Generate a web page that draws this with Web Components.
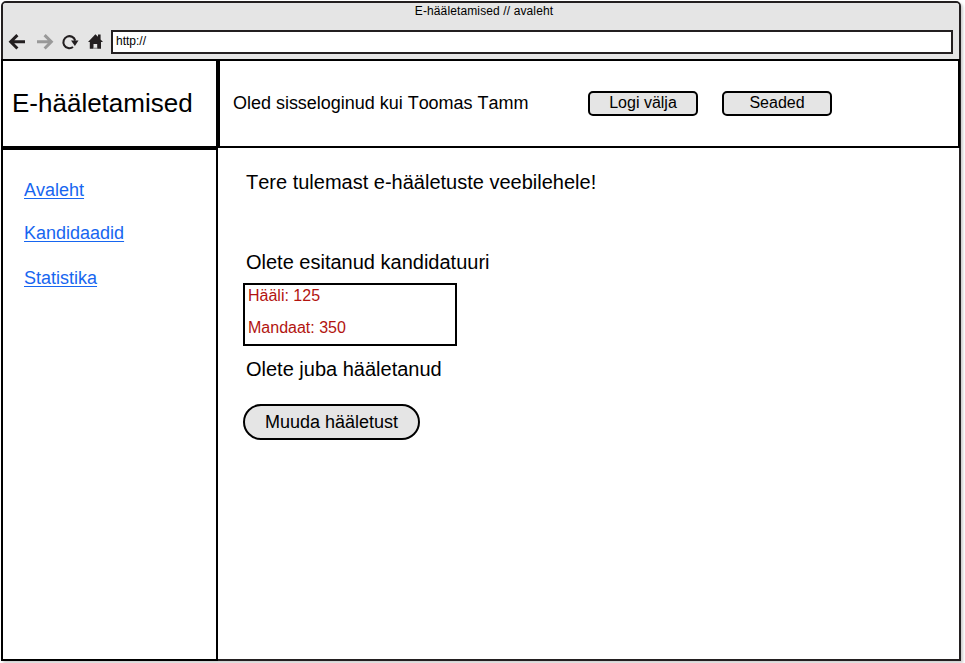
<!DOCTYPE html>
<html lang="et">
<head>
<meta charset="utf-8">
<title>E-hääletamised // avaleht</title>
<style>
html,body{margin:0;height:100%;overflow:hidden;background:#fff}
body{font-family:"Liberation Sans",Arial,sans-serif;color:#000;font-kerning:none}
</style>
</head>
<body>
<browser-window heading="E-hääletamised // avaleht" url="http://">
  <site-brand slot="brand">E-hääletamised</site-brand>
  <user-bar slot="user" message="Oled sisseloginud kui Toomas Tamm">
    <push-button>Logi välja</push-button>
    <push-button>Seaded</push-button>
  </user-bar>
  <side-nav slot="nav">
    <nav-link>Avaleht</nav-link>
    <nav-link>Kandidaadid</nav-link>
    <nav-link>Statistika</nav-link>
  </side-nav>
  <home-content slot="main">
    <candidate-stats slot="stats"><span>Hääli: 125</span><span>Mandaat: 350</span></candidate-stats>
    <push-button slot="action" pill>Muuda hääletust</push-button>
  </home-content>
</browser-window>
<script>
const component = (name, html) => customElements.define(name, class extends HTMLElement {
  constructor() {
    super();
    this.attachShadow({ mode: "open" }).innerHTML = html;
  }
  connectedCallback() {
    for (const el of this.shadowRoot.querySelectorAll("[data-attr]"))
      el.textContent = this.getAttribute(el.dataset.attr) || "";
  }
});

component("browser-window", `<style>
:host{display:flex;flex-direction:column;box-sizing:border-box;width:960px;height:660px;margin:1px 0 0 1px;border:2px solid #231f20;border-radius:5px 5px 0 0;background:#fff;box-shadow:2px 2px 3px rgba(0,0,0,.2)}
.chrome{height:56px;flex:none;background:#e5e5e5;border-radius:3px 3px 0 0}
.heading{font-size:12px;line-height:14px;height:27px;padding-top:1px;text-align:center;box-sizing:border-box;padding-left:6px;letter-spacing:.12px}
.tools{display:flex;align-items:center;height:24px;padding:0 6px 0 4px}
tool-icons{flex:none}
.url{box-sizing:border-box;flex:1;height:24px;border:2px solid #231f20;background:#fff;font-size:12px;line-height:19px;padding-left:3px}
.page{flex:1;display:grid;grid-template-columns:217px 1fr;grid-template-rows:91px 1fr;margin:0 0 -2px -2px}
.page>*{min-width:0;min-height:0}
</style>
<div class="chrome"><div class="heading" data-attr="heading"></div>
<div class="tools"><tool-icons></tool-icons><div class="url" data-attr="url"></div></div></div>
<div class="page"><slot name="brand"></slot><slot name="user"></slot><slot name="nav"></slot><slot name="main"></slot></div>`);

component("tool-icons", `<style>:host{display:block;width:104px;height:24px}svg{display:block}</style>
<svg width="104" height="24" viewBox="7 30 104 24" fill="none">
<path d="M25 41.8H11.2M17.4 35.1L10.7 41.8L17.4 48.5" stroke="#231f20" stroke-width="3"/>
<path d="M37 41.8H50.8M44.6 35.1L51.3 41.8L44.6 48.5" stroke="#999" stroke-width="3"/>
<path d="M73 47A6 6 0 1 1 75.2 40.6" stroke="#231f20" stroke-width="2.1"/>
<path d="M71 40.5H78.5L74.9 45.9Z" fill="#231f20"/>
<path d="M88 42L95.4 34.2L98 36.8V34.6H100.6V39.4L103 42H101V48.7H97.2V44H93.5V48.7H89.8V42Z" fill="#231f20"/>
<path d="M93.5 48.2H97.2" stroke="#777" stroke-width="1"/>
</svg>`);

component("site-brand", `<style>
:host{display:block;box-sizing:border-box;border:2px solid #000;border-bottom-width:4px;border-right:0;padding:27px 0 0 9px;font-size:26px;line-height:30px;white-space:nowrap;width:217px;height:91px}
</style><slot></slot>`);

component("user-bar", `<style>
:host{display:flex;box-sizing:border-box;height:89px;border:2px solid #000;border-left-width:4px;margin-left:-2px;margin-right:-1px;padding:30px 0 0 13px}
.msg{width:355px;flex:none;font-size:18px;line-height:24px;white-space:nowrap;letter-spacing:-.02px}
.buttons{display:flex;gap:24px}
</style><div class="msg" data-attr="message"></div><div class="buttons"><slot></slot></div>`);

component("push-button", `<style>
:host{display:block}
button{display:block;box-sizing:border-box;width:110px;height:25px;border:2px solid #000;border-radius:5px;background:#e5e5e5;color:#000;font:16px/20px "Liberation Sans",Arial,sans-serif;font-kerning:none;text-align:center;padding:0 0 1px}
:host([pill]) button{width:177px;height:36px;border-radius:18px;font-size:18px;line-height:30px}
</style><button><slot></slot></button>`);

component("side-nav", `<style>
:host{display:flex;flex-direction:column;align-items:flex-start;box-sizing:border-box;border:2px solid #000;border-top:0;padding:30px 0 0 21px;gap:23px}
</style><slot></slot>`);

component("nav-link", `<style>
:host{display:block;font-size:18px;line-height:20px;height:20px}
:host(:last-child){margin-top:2px}
a{color:#1766f0;text-decoration:underline;text-decoration-thickness:1px;text-underline-offset:2px}
</style><a href="#"><slot></slot></a>`);

component("home-content", `<style>
:host{display:flex;flex-direction:column;align-items:flex-start;padding:20px 0 0 25px;font-size:20px;line-height:24px}
p{margin:0 0 0 3px}
.owner{margin-top:56px}
.voted{margin-top:11px}
.stats{margin-top:9px}
.action{margin-top:23px}
</style>
<p>Tere tulemast e-hääletuste veebilehele!</p>
<p class="owner">Olete esitanud kandidatuuri</p>
<div class="stats"><slot name="stats"></slot></div>
<p class="voted">Olete juba hääletanud</p>
<div class="action"><slot name="action"></slot></div>`);

component("candidate-stats", `<style>
:host{display:flex;flex-direction:column;gap:12px;box-sizing:border-box;width:214px;height:63px;border:2px solid #000;padding:1px 0 0 3px;font-size:16px;line-height:20px;color:#b2140f}
</style><slot></slot>`);
</script>
</body>
</html>
